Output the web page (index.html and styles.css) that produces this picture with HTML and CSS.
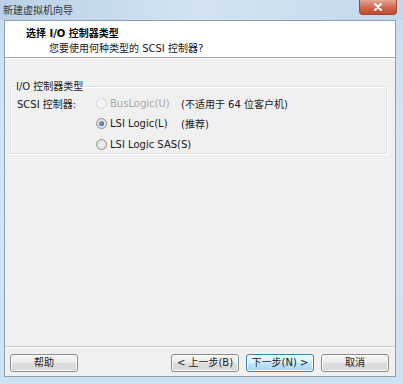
FILE: index.html
```html
<!DOCTYPE html>
<html lang="zh">
<head>
<meta charset="utf-8">
<link rel="stylesheet" href="styles.css">
</head>
<body>
<div class="window">
  <div class="titlebar">
    <span class="title">新建虚拟机向导</span>
    <span class="close"><svg width="10" height="8" viewBox="0 0 10 8"><path d="M2 1 L8 7 M8 1 L2 7" stroke="#fff" stroke-width="2" stroke-linecap="round"/></svg></span>
  </div>
  <div class="client">
    <div class="header">
      <div class="h-title">选择 I/O 控制器类型</div>
      <div class="h-sub">您要使用何种类型的 SCSI 控制器?</div>
    </div>
    <div class="body">
      <fieldset class="group">
        <legend>I/O 控制器类型</legend>
        <div class="grid">
          <div class="lbl">SCSI 控制器:</div>
          <label class="radio disabled"><span class="dot"></span>BusLogic(U)</label>
          <div class="note">(不适用于 64 位客户机)</div>
          <label class="radio checked"><span class="dot"></span>LSI Logic(L)</label>
          <div class="note">(推荐)</div>
          <label class="radio"><span class="dot"></span>LSI Logic SAS(S)</label>
        </div>
      </fieldset>
    </div>
    <div class="footer">
      <button class="btn">帮助</button>
      <span class="spacer"></span>
      <button class="btn">&lt; 上一步(B)</button>
      <button class="btn default">下一步(N) &gt;</button>
      <button class="btn">取消</button>
    </div>
  </div>
</div>
</body>
</html>
```
FILE: styles.css
```css
* { box-sizing: border-box; }
body {
  margin: 0;
  font-family: "DejaVu Sans", "Noto Sans CJK SC", sans-serif;
  font-size: 10px;
  color: #1a1a1a;
}
.window {
  width: 403px;
  height: 384px;
  background: linear-gradient(180deg, #c9dcee 0%, #d6e5f3 40%, #cfe0f0 100%);
  display: flex;
  flex-direction: column;
  padding: 0 7px 7px 4px;
}
.titlebar {
  height: 20px;
  display: flex;
  align-items: flex-start;
  margin-left: -4px;
  margin-right: -7px;
  background: linear-gradient(90deg, #b9d1e8 0%, #d3e3f2 50%, #c4d8ec 100%);
}
.title {
  font-size: 10px;
  color: #333;
  padding: 4px 0 0 3px;
  line-height: 13px;
}
.close {
  margin-left: auto;
  margin-right: 6px;
  width: 38px;
  height: 15px;
  border: 1px solid #9a4a3a;
  border-top: none;
  border-radius: 0 0 4px 4px;
  background: linear-gradient(180deg, #e4a894 0%, #d46a50 50%, #c04a30 100%);
  display: flex;
  align-items: center;
  justify-content: center;
}
.close svg { display: block; }
.client {
  flex: 1;
  display: flex;
  flex-direction: column;
  border: 1px solid #8e9fb2;
  background: #f0f0f0;
}
.header {
  height: 37px;
  background: #fff;
  border-bottom: 1px solid #a0a0a0;
  box-shadow: 0 1px 0 #fff;
  padding: 6px 0 0 21px;
}
.h-title {
  font-weight: bold;
  line-height: 14px;
  color: #000;
}
.h-sub {
  padding-left: 23px;
  line-height: 14px;
  margin-top: 1px;
  color: #202020;
}
.body {
  flex: 1;
  padding: 22px 8px 0 5px;
}
.group {
  margin: 0;
  border: 1px solid #e0e0e0;
  box-shadow: inset 1px 1px 0 #fff, 1px 1px 0 #fff;
  padding: 0 0 4px 6px;
  height: 74px;
}
.group legend {
  padding: 0 2px 0 0;
  margin-left: -1px;
  line-height: 13px;
  color: #222;
}
.grid {
  display: grid;
  grid-template-columns: 79px 85px auto;
  grid-auto-rows: 20.5px;
  align-items: center;
  margin-top: 0;
}
.lbl { grid-column: 1; }
.radio {
  grid-column: 2;
  display: flex;
  align-items: center;
  white-space: nowrap;
  color: #1a1a1a;
}
.radio.disabled { color: #a8a8a8; }
.note { grid-column: 3; }
.dot {
  width: 11px;
  height: 11px;
  border-radius: 50%;
  border: 1px solid #909090;
  background: radial-gradient(circle at 50% 50%, #f4f4f4 0%, #d8d8d8 100%);
  margin-right: 3px;
  position: relative;
  flex: none;
}
.disabled .dot { border-color: #d4d4d4; background: #f4f4f4; }
.checked .dot::after {
  content: "";
  position: absolute;
  left: 2px; top: 2px;
  width: 5px; height: 5px;
  border-radius: 50%;
  background: radial-gradient(circle at 40% 40%, #8fb0d0, #1e3e66);
}
.footer {
  height: 30px;
  border-top: 1px solid #c8c8c8;
  box-shadow: inset 0 1px 0 #fff;
  display: flex;
  align-items: flex-start;
  padding: 7px 6px 0 5px;
  gap: 7px;
}
.spacer { flex: 1; }
.btn {
  width: 68px;
  height: 18px;
  font: inherit;
  font-size: 10px;
  color: #1a1a1a;
  border: 1px solid #8c8c8c;
  border-radius: 3px;
  background: linear-gradient(180deg, #f6f6f6 0%, #ebebeb 50%, #dcdcdc 51%, #d8d8d8 100%);
  box-shadow: inset 0 0 0 1px #fbfbfb;
  padding: 0;
  line-height: 16px;
}
.btn.default {
  border-color: #3c7fb1;
  background: linear-gradient(180deg, #eaf6fd 0%, #d9f0fc 50%, #bee6fd 51%, #a7d9f5 100%);
}
```
